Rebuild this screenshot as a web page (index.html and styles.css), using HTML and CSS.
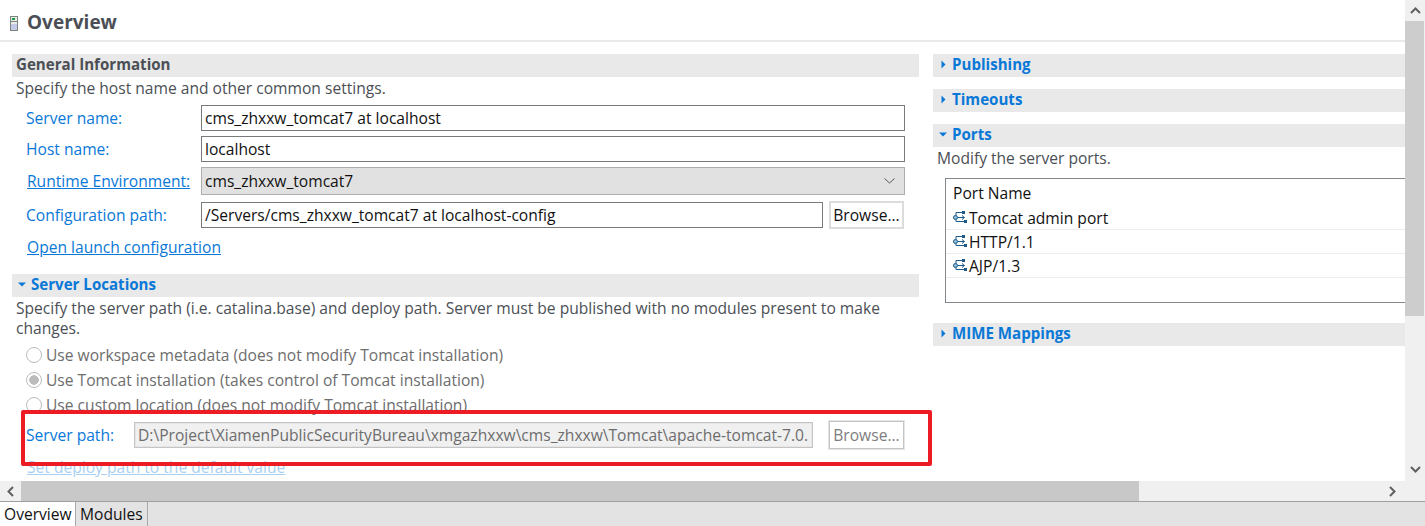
FILE: index.html
```html
<!DOCTYPE html>
<html lang="en">
<head>
  <meta charset="UTF-8">
  <title>Overview</title>
  <link rel="stylesheet" href="styles.css">
</head>
<body>
<div class="editor">
  <div class="view">
    <div class="form">
      <div class="title">
        <svg class="title-icon" width="8" height="15" viewBox="0 0 8 15">
          <rect x="0.5" y="0.5" width="7" height="14" fill="#e8ece8" stroke="#7d857e"/>
          <rect x="2" y="2" width="3" height="2" fill="#1f9a48"/>
          <rect x="1" y="5" width="6" height="1" fill="#7d857e"/>
          <rect x="1" y="8" width="6" height="6" fill="#c4cbe6"/>
        </svg>
        <h1>Overview</h1>
      </div>
      <div class="columns">
        <div class="left">
          <h2 class="section plain">General Information</h2>
          <p class="desc">Specify the host name and other common settings.</p>
          <div class="fields">
            <label class="blue">Server name:</label>
            <input class="wide" type="text" value="cms_zhxxw_tomcat7 at localhost">
            <label class="blue">Host name:</label>
            <input class="wide" type="text" value="localhost">
            <a class="link" href="#">Runtime Environment:</a>
            <div class="select wide">
              <span>cms_zhxxw_tomcat7</span>
              <svg width="11" height="6" viewBox="0 0 11 6"><path d="M0.5 0.5 L5.5 5 L10.5 0.5" fill="none" stroke="#555"/></svg>
            </div>
            <label class="blue">Configuration path:</label>
            <div class="browse-row">
              <input type="text" value="/Servers/cms_zhxxw_tomcat7 at localhost-config">
              <button>Browse...</button>
            </div>
          </div>
          <a class="link launch" href="#">Open launch configuration</a>

          <h2 class="section locations">
            <svg class="twisty" width="9" height="9" viewBox="0 0 9 9"><path d="M0 2.5 H8 L4 6.5 Z" fill="#0a78d7"/></svg>
            Server Locations
          </h2>
          <p class="desc two">Specify the server path (i.e. catalina.base) and deploy path. Server must be published with no modules present to make changes.</p>
          <div class="radios">
            <div class="radio"><span class="dot"></span>Use workspace metadata (does not modify Tomcat installation)</div>
            <div class="radio"><span class="dot on"></span>Use Tomcat installation (takes control of Tomcat installation)</div>
            <div class="radio"><span class="dot"></span>Use custom location (does not modify Tomcat installation)</div>
          </div>
          <div class="fields path">
            <label class="blue">Server path:</label>
            <div class="browse-row">
              <input class="off" type="text" disabled value="D:\Project\XiamenPublicSecurityBureau\xmgazhxxw\cms_zhxxw\Tomcat\apache-tomcat-7.0.">
              <button class="off" disabled>Browse...</button>
            </div>
          </div>
          <a class="link faded" href="#">Set deploy path to the default value</a>
        </div>

        <div class="right">
          <h2 class="section">
            <svg class="twisty" width="9" height="9" viewBox="0 0 9 9"><path d="M2.5 0.5 V8.5 L6.5 4.5 Z" fill="#0a78d7"/></svg>
            Publishing
          </h2>
          <h2 class="section next">
            <svg class="twisty" width="9" height="9" viewBox="0 0 9 9"><path d="M2.5 0.5 V8.5 L6.5 4.5 Z" fill="#0a78d7"/></svg>
            Timeouts
          </h2>
          <h2 class="section next">
            <svg class="twisty" width="9" height="9" viewBox="0 0 9 9"><path d="M0 2.5 H8 L4 6.5 Z" fill="#0a78d7"/></svg>
            Ports
          </h2>
          <p class="desc">Modify the server ports.</p>
          <div class="ports">
            <div class="ports-head">Port Name</div>
            <div class="port">
              <svg class="port-icon" width="14" height="13" viewBox="0 0 14 13"><path d="M3 6 V1.5 H10 M3 6 V10.5 H11 M5 6.5 H11 M9 4.5 L11.5 6.5 L9 8.5" fill="none" stroke="#1c5a8c"/><circle cx="2.5" cy="6.5" r="2" fill="#8fbcd8" stroke="#1c5a8c"/><rect x="9" y="0" width="3" height="3" fill="#1c5a8c"/><rect x="11" y="9" width="3" height="3" fill="#1c5a8c"/></svg>
              Tomcat admin port
            </div>
            <div class="port">
              <svg class="port-icon" width="14" height="13" viewBox="0 0 14 13"><path d="M3 6 V1.5 H10 M3 6 V10.5 H11 M5 6.5 H11 M9 4.5 L11.5 6.5 L9 8.5" fill="none" stroke="#1c5a8c"/><circle cx="2.5" cy="6.5" r="2" fill="#8fbcd8" stroke="#1c5a8c"/><rect x="9" y="0" width="3" height="3" fill="#1c5a8c"/><rect x="11" y="9" width="3" height="3" fill="#1c5a8c"/></svg>
              HTTP/1.1
            </div>
            <div class="port">
              <svg class="port-icon" width="14" height="13" viewBox="0 0 14 13"><path d="M3 6 V1.5 H10 M3 6 V10.5 H11 M5 6.5 H11 M9 4.5 L11.5 6.5 L9 8.5" fill="none" stroke="#1c5a8c"/><circle cx="2.5" cy="6.5" r="2" fill="#8fbcd8" stroke="#1c5a8c"/><rect x="9" y="0" width="3" height="3" fill="#1c5a8c"/><rect x="11" y="9" width="3" height="3" fill="#1c5a8c"/></svg>
              AJP/1.3
            </div>
          </div>
          <h2 class="section mime">
            <svg class="twisty" width="9" height="9" viewBox="0 0 9 9"><path d="M2.5 0.5 V8.5 L6.5 4.5 Z" fill="#0a78d7"/></svg>
            MIME Mappings
          </h2>
        </div>
      </div>
    </div>
    <div class="vbar">
      <svg width="11" height="7" viewBox="0 0 11 7"><path d="M1 6 L5.5 1.5 L10 6" fill="none" stroke="#606060" stroke-width="2"/></svg>
      <div class="vthumb"></div>
      <svg class="vdown" width="11" height="7" viewBox="0 0 11 7"><path d="M1 1 L5.5 5.5 L10 1" fill="none" stroke="#606060" stroke-width="2"/></svg>
    </div>
    <div class="mark"></div>
  </div>
  <div class="hbar">
    <svg width="7" height="11" viewBox="0 0 7 11"><path d="M6 1 L1.5 5.5 L6 10" fill="none" stroke="#606060" stroke-width="2"/></svg>
    <div class="hthumb"></div>
    <svg class="hright" width="7" height="11" viewBox="0 0 7 11"><path d="M1 1 L5.5 5.5 L1 10" fill="none" stroke="#606060" stroke-width="2"/></svg>
  </div>
  <div class="tabs">
    <div class="tab active">Overview</div>
    <div class="tab">Modules</div>
  </div>
</div>
</body>
</html>
```

FILE: styles.css
```css
html, body {
  margin: 0;
  height: 100%;
  overflow: hidden;
}
body {
  font-family: "Open Sans", "Noto Sans", sans-serif;
  font-size: 15.6px;
  color: #111;
  background: #fff;
}
.editor {
  display: flex;
  flex-direction: column;
  height: 526px;
}
.view {
  position: relative;
  display: flex;
  height: 481px;
  overflow: hidden;
}
.form {
  width: 1405px;
  flex: none;
  overflow: hidden;
}

/* header */
.title {
  display: flex;
  align-items: center;
  height: 36px;
  padding: 4px 0 0 10px;
  border-bottom: 2px solid #e9e9e9;
}
.title-icon {
  margin: 3px 9px 0 0;
}
h1 {
  margin: 0;
  font-size: 19px;
  font-weight: 700;
  color: #4b4f55;
}

.columns {
  display: flex;
  padding: 12px 0 0 12px;
}
.left {
  width: 907px;
  flex: none;
}
.right {
  width: 472px;
  margin-left: 14px;
  flex: none;
}

.section {
  display: flex;
  align-items: center;
  box-sizing: border-box;
  height: 23px;
  margin: 0;
  padding: 0 0 4px 6px;
  font-size: 15.1px;
  font-weight: 700;
  color: #0a78d7;
  background: #e9e9e9;
}
.section.plain {
  padding-left: 4px;
  color: #4b4f55;
}
.section.next {
  margin-top: 12px;
}
.section.locations {
  margin-top: 17px;
}
.section.mime {
  margin-top: 20px;
}
.twisty {
  margin: 2px 4px 0 0;
}

.desc {
  margin: 0;
  padding: 1px 0 0 4px;
  height: 20px;
  line-height: 20px;
  color: #4b4f55;
}
.desc.two {
  height: 40px;
}

.fields {
  display: grid;
  grid-template-columns: 175px 704px;
  row-gap: 5px;
  align-items: center;
  margin-top: 7px;
  padding-left: 14px;
}
.blue {
  color: #0a78d7;
}
.link {
  color: #0a78d7;
  text-decoration: underline;
  white-space: nowrap;
}
.fields .link {
  margin-left: 1px;
}
.launch {
  display: block;
  margin: 8px 0 0 15px;
  height: 20px;
  line-height: 20px;
}

input {
  box-sizing: border-box;
  height: 26px;
  padding: 0 3px;
  border: 1px solid #7a7a7a;
  font: inherit;
  color: #111;
  background: #fff;
}
.wide {
  width: 704px;
}
.select {
  display: flex;
  align-items: center;
  justify-content: space-between;
  box-sizing: border-box;
  height: 28px;
  padding: 0 9px 0 3px;
  border: 1px solid #adadad;
  background: #e1e1e1;
}
.browse-row {
  display: flex;
  align-items: center;
  gap: 6px;
  margin-top: 1px;
}
.browse-row input {
  width: 622px;
}
button {
  box-sizing: border-box;
  width: 75px;
  height: 28px;
  padding: 0;
  border: 2px solid #dcdcdc;
  font: inherit;
  color: #111;
  background: #fff;
}

/* disabled server path row */
.radios {
  margin-top: 4px;
  padding-left: 14px;
}
.radio {
  display: flex;
  align-items: center;
  height: 25px;
  color: #6d6d6d;
}
.dot {
  box-sizing: border-box;
  width: 16px;
  height: 16px;
  margin-right: 4px;
  border: 1px solid #bcbcbc;
  border-radius: 50%;
  background: #fff;
}
.dot.on {
  border-color: #bcbcbc;
  background: radial-gradient(circle, #bcbcbc 0 4.5px, #fff 5px);
}
.path {
  grid-template-columns: 108px 770px;
  margin-top: 3px;
}
.path .browse-row {
  gap: 16px;
}
.path .browse-row input {
  width: 679px;
}
input.off {
  border-color: #c4c4c4;
  color: #6d6d6d;
  background: #f0f0f0;
  outline: 1px solid #e6e6e6;
  outline-offset: -2px;
}
button.off {
  border-color: #c4c4c4;
  border-width: 1px;
  color: #7d7d7d;
  outline: 1px solid #e6e6e6;
}
.faded {
  display: block;
  margin: 8px 0 0 15px;
  height: 20px;
  line-height: 20px;
  color: #a9d0f2;
}

/* ports table */
.ports {
  box-sizing: border-box;
  width: 470px;
  height: 125px;
  margin: 10px 0 0 12px;
  border: 1px solid #82878c;
  border-right: 0;
}
.ports-head {
  height: 27px;
  line-height: 28px;
  padding-left: 7px;
}
.port {
  display: flex;
  align-items: center;
  box-sizing: border-box;
  height: 24px;
  padding-left: 7px;
  border-bottom: 1px solid #ececec;
}
.port-icon {
  margin-right: 2px;
}

/* scrollbars */
.vbar {
  position: relative;
  width: 20px;
  flex: none;
  background: #f0f0f0;
  text-align: center;
}
.vbar svg {
  display: block;
  margin: 7px auto 0;
}
.vthumb {
  width: 19px;
  height: 295px;
  margin-top: 7px;
  background: #cdcdcd;
}
.vbar .vdown {
  margin-top: 150px;
}
.hbar {
  display: flex;
  align-items: center;
  height: 20px;
  background: #f0f0f0;
}
.hbar svg {
  margin-left: 7px;
}
.hthumb {
  width: 1118px;
  height: 20px;
  margin-left: 7px;
  background: #c8c8c8;
}
.hbar .hright {
  margin-left: 250px;
}

/* tabs */
.tabs {
  display: flex;
  flex: 1;
  align-items: flex-start;
  border-top: 1px solid #a0a0a0;
  background: #e3e3e3;
}
.tab {
  box-sizing: border-box;
  height: 24px;
  padding: 0 4px;
  line-height: 24px;
  border-right: 1px solid #a9a9a9;
}
.tab.active {
  width: 76px;
  background: #fff;
}

/* annotation drawn over the screenshot */
.mark {
  position: absolute;
  left: 21px;
  top: 410px;
  width: 903px;
  height: 48px;
  border: 4px solid #ed1c24;
  border-radius: 2px;
}
```
